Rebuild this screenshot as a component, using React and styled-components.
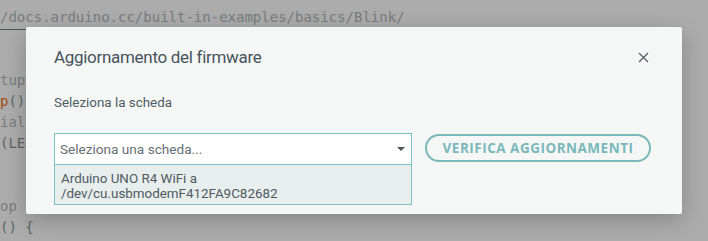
import React from "react";
import styled, { createGlobalStyle } from "styled-components";

const Global = createGlobalStyle`
  html, body { margin: 0; padding: 0; }
  body { background: #acacac; overflow: hidden; width: 708px; height: 241px; }
`;

const Page = styled.div`
  position: relative;
  width: 708px;
  height: 241px;
  overflow: hidden;
  background: #acacac;
`;

const Code = styled.pre`
  margin: 0;
  padding-top: 7px;
  font-family: "DejaVu Sans Mono", monospace;
  font-size: 14px;
  line-height: 21px;
  color: #5d6466;
  white-space: pre;
`;

const Line = styled.div`
  height: 21px;
`;

const Link = styled.span`
  text-decoration: underline;
  text-underline-offset: 7px;
  text-decoration-color: #4f5658;
`;

const Fn = styled.span`
  color: #a34a0c;
`;

const Comment = styled.span`
  color: #777d80;
`;

const Dialog = styled.div`
  position: absolute;
  left: 26px;
  top: 27px;
  width: 656px;
  height: 187px;
  box-sizing: border-box;
  background: #f5f7f7;
  border-radius: 2px;
  box-shadow: 0 6px 22px rgba(0, 0, 0, 0.22);
  padding: 19px 28px 0 28px;
  font-family: Roboto, "Noto Sans", sans-serif;
  color: #4e5b61;
  display: flex;
  flex-direction: column;
`;

const Header = styled.div`
  display: flex;
  align-items: center;
  justify-content: space-between;
  height: 22px;
`;

const Title = styled.div`
  font-size: 17px;
  font-weight: 400;
  letter-spacing: -0.3px;
  color: #46535a;
`;

const Close = styled.button`
  border: none;
  background: none;
  padding: 0;
  margin-right: 5px;
  width: 12px;
  height: 12px;
  display: flex;
  align-items: center;
  justify-content: center;
  cursor: pointer;
`;

const Label = styled.div`
  margin-top: 27px;
  font-size: 13.4px;
  line-height: 16px;
`;

const Row = styled.div`
  margin-top: 22px;
  display: flex;
  align-items: flex-start;
  gap: 13px;
`;

const SelectCol = styled.div`
  width: 358px;
  display: flex;
  flex-direction: column;
`;

const SelectBox = styled.div`
  height: 32px;
  box-sizing: border-box;
  border: 1px solid #79c3c5;
  background: #ffffff;
  display: flex;
  align-items: center;
  justify-content: space-between;
  padding: 0 5px 0 5px;
  font-size: 13.6px;
  color: #676f74;
`;

const Caret = styled.span`
  width: 0;
  height: 0;
  border-left: 4px solid transparent;
  border-right: 4px solid transparent;
  border-top: 4px solid #4e5458;
  margin-right: 1px;
`;

const Options = styled.div`
  box-sizing: border-box;
  border: 1px solid #79c3c5;
  border-top: none;
  background: #e8eded;
  padding: 6px 6px 3px 6px;
  font-size: 13.4px;
  line-height: 15px;
  color: #4e5b61;
`;

const Button = styled.button`
  margin-top: 1px;
  height: 28px;
  width: 226px;
  box-sizing: border-box;
  border: 2px solid #7ab8ba;
  border-radius: 14px;
  background: transparent;
  color: #7ab8ba;
  font-family: "Open Sans", sans-serif;
  font-weight: 700;
  font-size: 13.5px;
  letter-spacing: 0.5px;
  padding: 0;
  display: flex;
  align-items: center;
  justify-content: center;
`;

export default function App() {
  return (
    <>
      <Global />
      <Page>
        <Code>
          <Line><Comment><Link>/docs.arduino.cc/built-in-examples/basics/Blink/</Link></Comment></Line>
          <Line></Line>
          <Line></Line>
          <Line><Comment>tup function runs once when you press reset or power the board</Comment></Line>
          <Line><Fn>p</Fn>() {"{"}</Line>
          <Line><Comment>ialize digital pin LED_BUILTIN as an output.</Comment></Line>
          <Line>(LED_BUILTIN, OUTPUT);</Line>
          <Line></Line>
          <Line></Line>
          <Line><Comment>op function runs over and over again forever</Comment></Line>
          <Line>() {"{"}</Line>
        </Code>
        <Dialog>
          <Header>
            <Title>Aggiornamento del firmware</Title>
            <Close aria-label="Chiudi">
              <svg width="11" height="11" viewBox="0 0 11 11">
                <path d="M1 1 L10 10 M10 1 L1 10" stroke="#4e5b61" strokeWidth="1.2" fill="none" />
              </svg>
            </Close>
          </Header>
          <Label>Seleziona la scheda</Label>
          <Row>
            <SelectCol>
              <SelectBox>
                <span>Seleziona una scheda...</span>
                <Caret />
              </SelectBox>
              <Options>
                Arduino UNO R4 WiFi a
                <br />
                /dev/cu.usbmodemF412FA9C82682
              </Options>
            </SelectCol>
            <Button>VERIFICA AGGIORNAMENTI</Button>
          </Row>
        </Dialog>
      </Page>
    </>
  );
}
